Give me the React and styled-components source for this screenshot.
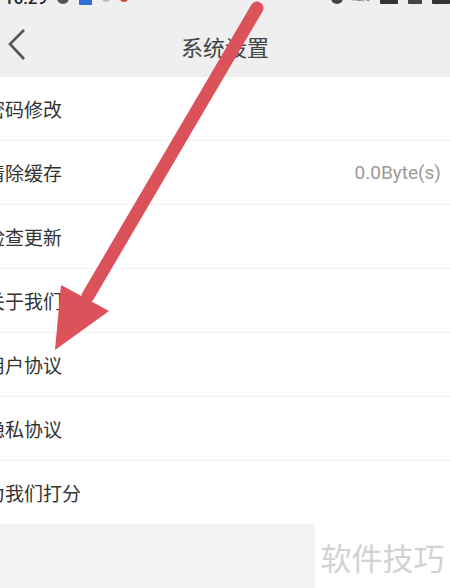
import React from "react"
import styled, { createGlobalStyle } from "styled-components"

const Global = createGlobalStyle`
  html, body {
    margin: 0;
    padding: 0;
    background: #f4f4f4;
  }
  body {
    font-family: Roboto, "Noto Sans CJK SC", sans-serif;
  }
`;

const Screen = styled.div`
  position: relative;
  width: 450px;
  height: 588px;
  overflow: hidden;
  background: #f4f4f4;
`;

const Header = styled.div`
  background: #efefef;
  height: 77px;
  display: flex;
  flex-direction: column;
`;

const StatusBar = styled.div`
  height: 14px;
  overflow: hidden;
  display: flex;
  align-items: flex-start;
  justify-content: space-between;
  padding: 0 0 0 4px;
`;

const StatusGroup = styled.div`
  display: flex;
  align-items: center;
  gap: 10px;
  margin-top: -11px;
  height: 18px;
`;

const Clock = styled.span`
  font-family: Roboto, sans-serif;
  font-size: 17px;
  font-weight: 500;
  color: #222;
`;

const Dot = styled.span`
  display: inline-block;
  width: ${p => p.w || 12}px;
  height: ${p => p.h || 12}px;
  border-radius: ${p => p.round ? "50%" : "1px"};
  background: ${p => p.color};
`;

const Speed = styled.span`
  font-size: 8px;
  color: #555;
`;

const NavBar = styled.div`
  position: relative;
  height: 63px;
  display: flex;
  align-items: center;
  justify-content: center;
`;

const Back = styled.button`
  position: absolute;
  left: 4px;
  top: 14px;
  width: 26px;
  height: 34px;
  padding: 0;
  border: 0;
  background: none;
  display: flex;
  align-items: center;
  justify-content: center;
`;

const Title = styled.h1`
  margin: 0;
  font-family: "Noto Sans CJK SC", sans-serif;
  font-size: 22px;
  font-weight: 400;
  color: #444;
  letter-spacing: 0;
`;

const List = styled.ul`
  list-style: none;
  margin: 0;
  padding: 0;
  background: #fff;
`;

const Row = styled.li`
  height: 63px;
  display: flex;
  align-items: center;
  justify-content: space-between;
  padding-right: 9px;
  border-bottom: 1px solid ${p => (p.last ? "#f1f1f1" : "#f3f3f3")};
`;

const Label = styled.span`
  margin-left: -14px;
  font-family: "Noto Sans CJK SC", sans-serif;
  font-size: 19px;
  color: #333;
`;

const Value = styled.span`
  font-family: Roboto, sans-serif;
  font-size: 19px;
  color: #9a9a9a;
`;

const Watermark = styled.div`
  position: absolute;
  left: 315px;
  top: 524px;
  width: 135px;
  height: 64px;
  background: #fff;
  display: flex;
  align-items: center;
  justify-content: center;
  font-family: "Noto Sans CJK SC", sans-serif;
  font-size: 31px;
  color: #d2d2d2;
`;

const Arrow = styled.svg`
  position: absolute;
  left: 0;
  top: 0;
  pointer-events: none;
`;

const rows = [
  { label: "密码修改" },
  { label: "清除缓存", value: "0.0Byte(s)" },
  { label: "检查更新" },
  { label: "关于我们" },
  { label: "用户协议" },
  { label: "隐私协议" },
  { label: "为我们打分" },
];

export default function App() {
  return (
    <Screen>
      <Global />
      <Header>
        <StatusBar>
          <StatusGroup>
            <Clock>10:29</Clock>
            <Dot w={12} h={12} round color="#555" />
            <Dot w={13} h={13} color="#2f6fd6" />
            <Dot w={8} h={8} round color="#bbb" />
            <Dot w={8} h={8} round color="#d04040" />
          </StatusGroup>
          <StatusGroup>
            <Dot w={12} h={12} round color="#444" />
            <Speed>KB/s</Speed>
            <Dot w={18} h={12} color="#333" />
            <Dot w={14} h={12} color="#444" />
            <Dot w={18} h={12} color="#333" />
          </StatusGroup>
        </StatusBar>
        <NavBar>
          <Back aria-label="返回">
            <svg width="20" height="34" viewBox="0 0 20 34">
              <path d="M17 2 L3 16 L17 31" fill="none" stroke="#555" strokeWidth="2.6" />
            </svg>
          </Back>
          <Title>系统设置</Title>
        </NavBar>
      </Header>
      <List>
        {rows.map((r, i) => (
          <Row key={r.label} last={i === rows.length - 1}>
            <Label>{r.label}</Label>
            {r.value && <Value>{r.value}</Value>}
          </Row>
        ))}
      </List>
      <Watermark>软件技巧</Watermark>
      <Arrow width="450" height="588" viewBox="0 0 450 588">
        <line x1="257" y1="8" x2="88" y2="296" stroke="#db525b" strokeWidth="13" strokeLinecap="round" />
        <polygon points="61,285 109,311 55,350" fill="#db525b" />
      </Arrow>
    </Screen>
  );
}
